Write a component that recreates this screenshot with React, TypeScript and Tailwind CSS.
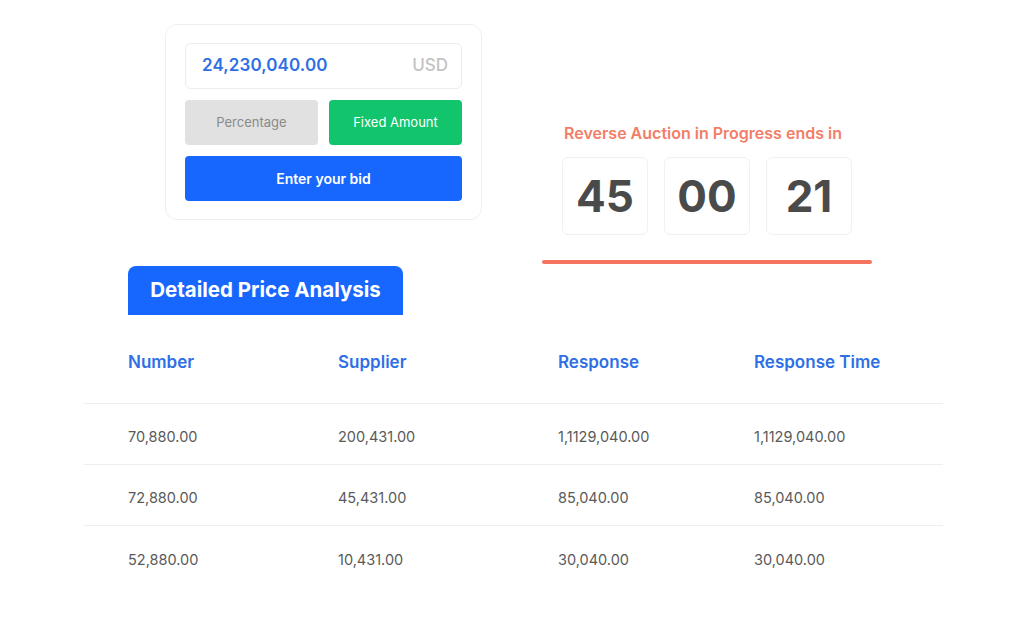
const ROWS = [
  ['70,880.00', '200,431.00', '1,1129,040.00', '1,1129,040.00'],
  ['72,880.00', '45,431.00', '85,040.00', '85,040.00'],
  ['52,880.00', '10,431.00', '30,040.00', '30,040.00'],
];

const HEADERS = ['Number', 'Supplier', 'Response', 'Response Time'];

// column widths so text starts line up with the picture
const COLS = 'grid grid-cols-[210px_220px_196px_1fr]';

export default function App() {
  return (
    <div className="w-[1024px] h-[625px] bg-white overflow-hidden font-['Inter','Liberation_Sans',sans-serif]">
      {/* top: bid card + countdown */}
      <div className="flex pt-[24px] pl-[165px]">
        <div className="w-[317px] h-[196px] rounded-xl border border-[#efefef] px-[19px] pt-[18px] flex flex-col gap-[11px]">
          <div className="h-[46px] rounded-md border border-[#ececec] flex items-center justify-between pl-[16px] pr-[13px]">
            <span className="text-[17px] font-semibold text-[#2f6fe6] tracking-[0.1px]">24,230,040.00</span>
            <span className="text-[17px] font-medium text-[#c4c4c4]">USD</span>
          </div>
          <div className="flex gap-[11px]">
            <button className="w-[133px] h-[45px] rounded-[4px] bg-[#e1e1e1] text-[13px] text-[#8a8a8a]">Percentage</button>
            <button className="flex-1 h-[45px] rounded-[4px] bg-[#12c46c] text-[13px] text-white">Fixed Amount</button>
          </div>
          <button className="h-[45px] rounded-[4px] bg-[#1766fe] text-[14px] font-semibold text-white">Enter your bid</button>
        </div>

        <div className="ml-[60px] w-[330px] pt-[97px] flex flex-col items-center">
          <div className="text-[16px] font-semibold text-[#f27d68] mr-[8px]">Reverse Auction in Progress ends in</div>
          <div className="flex gap-[16px] mt-[12px]">
            {['45', '00', '21'].map(n => (
              <div key={n} className="w-[86px] h-[78px] rounded-md border border-[#f1f1f1] flex items-center justify-center text-[44px] font-bold text-[#4a4a4a]">
                {n}
              </div>
            ))}
          </div>
          <div className="w-[330px] h-[4px] rounded-full bg-[#f47460] mt-[25px]" />
        </div>
      </div>

      {/* price analysis table */}
      <div className="pl-[128px] mt-[2px]">
        <div className="w-[275px] h-[49px] rounded-t-lg bg-[#1766fe] flex items-center justify-center text-[20.5px] font-bold text-white">
          Detailed Price Analysis
        </div>
      </div>
      <div className="ml-[84px] w-[859px]">
        <div className={`${COLS} h-[89px] items-center pt-[8px] pl-[44px] border-b border-[#efefef] text-[17px] font-semibold text-[#2f6fe6]`}>
          {HEADERS.map(h => <div key={h}>{h}</div>)}
        </div>
        {ROWS.map((r, i) => (
          <div key={i} className={`${COLS} h-[61px] items-center pt-[6px] pl-[44px] text-[14.5px] text-[#5a5a5a] ${i < ROWS.length - 1 ? 'border-b border-[#efefef]' : ''}`}>
            {r.map((c, j) => <div key={j}>{c}</div>)}
          </div>
        ))}
      </div>
    </div>
  );
}
